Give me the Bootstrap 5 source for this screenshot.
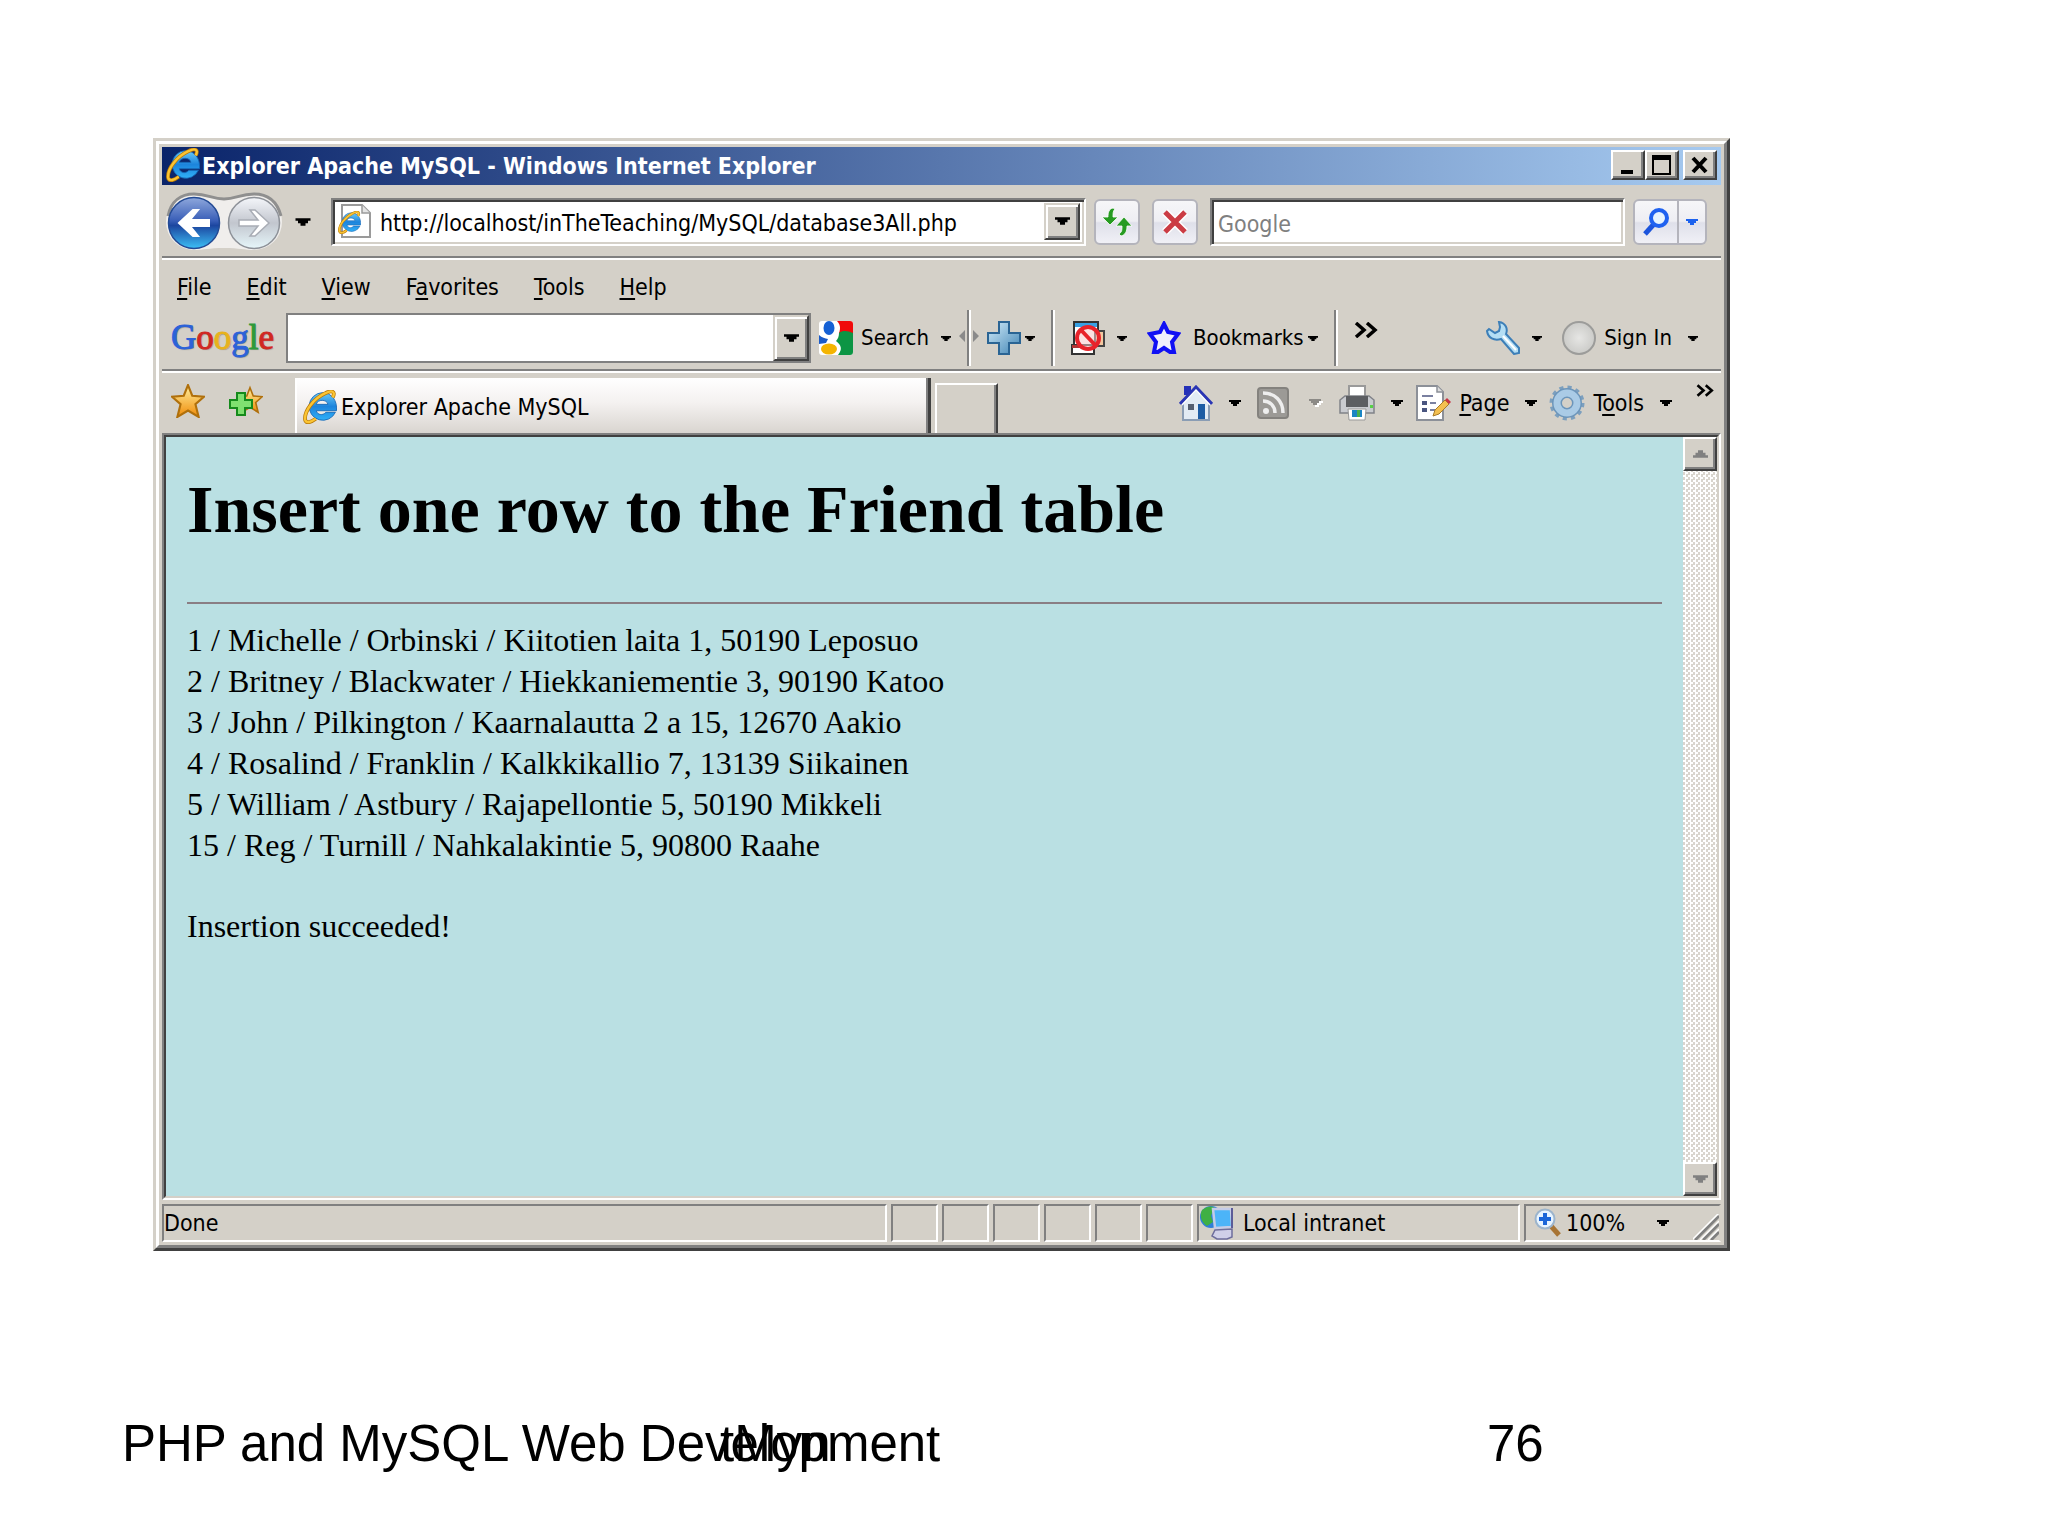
<!DOCTYPE html>
<html lang="en">
<head>
<meta charset="utf-8">
<meta name="viewport" content="width=device-width, initial-scale=1">
<title>PHP and MySQL Web Development</title>
<link href="https://cdn.jsdelivr.net/npm/bootstrap@5.3.0/dist/css/bootstrap.min.css" rel="stylesheet">
<style>
:root{--face:#d4d0c8;--shade:#808080;--dark:#404040}
body{background:#fff;color:#000;font-family:"DejaVu Sans Condensed","DejaVu Sans",sans-serif;font-size:23px;line-height:28px}
svg{display:block;flex:none}
button,input{font:inherit;color:inherit}
a{color:inherit;text-decoration:none}
u{text-decoration-thickness:2px;text-underline-offset:3px}
.slide-body{padding:138px 318px 0 153px}
.win-outer{border:3px solid;border-color:var(--face) var(--dark) var(--dark) var(--face)}
.win-inner{border:3px solid;border-color:#fff var(--shade) var(--shade) #fff;padding:3px;background:var(--face)}
.title-bar{height:38px;background:linear-gradient(90deg,#0a246a,#a6caf0);color:#fff;font-weight:700;padding:0 4px 2px}
.title-bar h2{font:inherit;margin:0;padding:2px 0 0 2px}
.win-btn{width:34px;height:30px;padding:0;display:flex;align-items:center;justify-content:center;background:var(--face);border:2px solid;border-color:#fff var(--dark) var(--dark) #fff;box-shadow:inset -2px -2px 0 var(--shade)}
.groove{border-bottom:2px solid var(--shade);box-shadow:0 2px 0 #fff}
.nav-row{height:73px;padding:2px 14px 0 3px}
.sunk{background:#fff;border:2px solid;border-color:var(--shade) #fff #fff var(--shade);box-shadow:inset 2px 2px 0 var(--dark),inset -2px -2px 0 var(--face)}
.address{height:48px;padding:3px 4px 4px 5px}
.bare{border:0;outline:0;background:none;padding:0;min-width:0}
.address .bare{padding-top:4px}
.bare::placeholder,.find::placeholder{color:#808080;opacity:1}
.find{height:48px;width:415px;padding:4px 6px 0}
.soft{height:46px;min-width:46px;padding:0;border:2px solid #b4b4bc;border-radius:6px;background:linear-gradient(#f6f6f8,#eeeef3 48%,#dfe0ea 52%,#f0f0f6);display:flex;align-items:center;justify-content:center}
.soft-narrow{min-width:28px;color:#1c62ee}
.menu-row{height:53px;padding:4px 15px 0;gap:35px}
.google-row{height:60px;padding:0 23px 4px 9px;font-size:22px}
.combo{flex:0 1 525px;height:50px;background:#fff;border:2px solid var(--shade)}
.drop-btn{width:36px;padding:0;align-self:stretch;display:flex;align-items:center;justify-content:center;background:var(--face);border:2px solid;border-color:var(--face) var(--dark) var(--dark) var(--face);box-shadow:inset 2px 2px 0 #fff,inset -2px -2px 0 var(--shade)}
.glogo{font:35px/40px "Liberation Serif",serif;text-shadow:1px 1px 1px #0004;-webkit-text-stroke:1px}
.g-blue{color:#2c62d8}.g-red{color:#d02822}.g-gold{color:#e8b21c}.g-green{color:#2f9a3a}
.tool{border:0;background:none;padding:0;display:flex;align-items:center;white-space:nowrap}
.rule-v{width:4px;height:56px;border-left:2px solid var(--shade);border-right:2px solid #fff;flex:none}
.s4{margin-left:4px}.s8{margin-left:8px}.s12{margin-left:12px}.s16{margin-left:16px}.s20{margin-left:20px}.s24{margin-left:24px}.s32{margin-left:32px}
.tab-row{height:62px;padding:0 7px 0 9px}
.tab-on{width:636px;height:55px;padding:2px 8px 0;background:linear-gradient(#fff,#f4f1f0 45%,#d9d5d0);border:0;border-right:3px solid var(--dark);box-shadow:inset 2px 0 0 #fff,inset -2px 0 0 var(--shade)}
.tab-new{width:63px;height:50px;background:var(--face);border:2px solid;border-color:#fff var(--dark) transparent #fff;border-bottom:0;box-shadow:inset -2px 0 0 var(--shade);padding:0}
.tab-tools{padding-top:13px}
.view{border:2px solid;border-color:var(--shade) #fff #fff var(--shade)}
.view-in{border:2px solid;border-color:var(--dark) var(--face) var(--face) var(--dark);min-height:763px;background:#bae0e3}
.page{font-family:"Liberation Serif",serif;font-size:32px;line-height:41px;padding:34px 21px 0 21px}
.page h1{font-size:68px;line-height:76px;font-weight:700;margin:0 0 55px}
.page hr{margin:0 0 16px;border:0;border-top:2px solid #8a7e84;opacity:1}
.page ul{margin:0 0 40px}
.scroll{width:34px;background:repeating-conic-gradient(#fff 0 25%,#d9d5ce 0 50%) 0 0/5px 5px}
.scroll .win-btn{height:34px}
.status{gap:4px;margin-top:4px;height:38px}
.cell{border:2px solid;border-color:var(--shade) #fff #fff var(--shade);width:47px;height:38px;white-space:nowrap}
.cell-zone{width:323px}.cell-zoom{width:197px;border-right-color:transparent}
.slide-foot{font-family:"Liberation Sans",sans-serif;font-size:51px;line-height:58px;padding:164px 0 40px 122px;white-space:nowrap}
.f1{width:598px}.f2{width:767px}
</style>
</head>
<body>
<svg width="0" height="0" class="position-absolute" aria-hidden="true">
<defs>
<linearGradient id="gb" x1="0" y1="0" x2="0" y2="1"><stop offset="0" stop-color="#8fa8dc"/><stop offset=".45" stop-color="#3a5fb8"/><stop offset=".55" stop-color="#1c46a0"/><stop offset="1" stop-color="#3cc0f6"/></linearGradient>
<linearGradient id="gf" x1="0" y1="0" x2="0" y2="1"><stop offset="0" stop-color="#f4f6fa"/><stop offset=".5" stop-color="#c2c6ce"/><stop offset="1" stop-color="#e6f6fa"/></linearGradient>
<linearGradient id="gs" x1="0" y1="0" x2="0" y2="1"><stop offset="0" stop-color="#fff0a0"/><stop offset="1" stop-color="#f08c08"/></linearGradient>
<linearGradient id="gp" x1="0" y1="0" x2="1" y2="1"><stop offset="0" stop-color="#d2ecfa"/><stop offset="1" stop-color="#3f83b4"/></linearGradient>
<linearGradient id="ge" x1="0" y1="0" x2="0" y2="1"><stop offset="0" stop-color="#6cccf8"/><stop offset=".5" stop-color="#1c84dc"/><stop offset="1" stop-color="#30b0f8"/></linearGradient>
<radialGradient id="go"><stop offset="0" stop-color="#e6e6e4"/><stop offset="1" stop-color="#cbcbc8"/></radialGradient>
<symbol id="dn" viewBox="0 0 12 8"><path d="M0 1h12v2h-2v2H8v2H4V5H2V3H0z" fill="currentColor"/></symbol>
<symbol id="up" viewBox="0 0 12 8"><path d="M0 7h12V5h-2V3H8V1H4v2H2v2H0z" fill="currentColor"/></symbol>
<symbol id="ie" viewBox="0 0 32 32"><path d="M18 2.500a13 13 0 1 0 12.500 18.500h-9c-3 3.500-8 2.500-9-1.500h19C32.500 10 27 2.500 18 2.500zM12.500 13.500c1-5 10-5 11 0z" fill="url(#ge)" stroke="#1566b4" stroke-width=".8" fill-rule="evenodd"/><path d="M28 7c3-6-1-7-7-4C10 8 1 20 2 28c1 4 6 2 10-1" fill="none" stroke="#b97a08" stroke-width="3.600"/><path d="M28 7c3-6-1-7-7-4C10 8 1 20 2 28c1 4 6 2 10-1" fill="none" stroke="#fbc433" stroke-width="2.200"/></symbol>
<symbol id="star" viewBox="0 0 32 32"><path d="M16 1l4 10 11 1-8 7 3 12-10-6-10 6 3-12-8-7 11-1z" fill="url(#gs)" stroke="#b0700c" stroke-width="2"/></symbol>
<symbol id="more" viewBox="0 0 24 16"><path d="M2 1l8 7-8 7M13 1l8 7-8 7" fill="none" stroke="#000" stroke-width="3.500"/></symbol>
</defs>
</svg>

<main class="slide-body">
<div class="win-outer"><div class="win-inner">
  <div class="title-bar d-flex align-items-center">
    <svg width="34" height="34" aria-hidden="true"><use href="#ie"/></svg>
    <h2 class="flex-grow-1 text-nowrap">Explorer Apache MySQL - Windows Internet Explorer</h2>
    <button class="win-btn" aria-label="Minimize"><svg width="20" height="20"><path d="M3 15h12v4H3z"/></svg></button>
    <button class="win-btn" aria-label="Maximize"><svg width="20" height="20"><path d="M0 0h19v20H0zM2 5v13h15V5z" fill-rule="evenodd"/></svg></button>
    <button class="win-btn s4" aria-label="Close"><svg width="20" height="18"><path d="M3 2l13 14M16 2L3 16" stroke="#000" stroke-width="4"/></svg></button>
  </div>

  <div class="nav-row groove d-flex align-items-center">
    <svg width="118" height="60" viewBox="0 0 118 60" role="img" aria-label="Back and forward">
      <path d="M29 2c14 0 18 5 30 5S75 2 89 2a28 28 0 0 1 0 56c-10 0-14-2-30-2s-20 2-30 2a28 28 0 0 1 0-56z" fill="#f0eeec"/>
      <path d="M3 24C6 9 16 2 29 2c14 0 18 5 30 5S75 2 89 2c13 0 23 7 27 22" fill="none" stroke="#8f8f8f" stroke-width="3"/>
      <circle cx="29" cy="31" r="25.500" fill="url(#gb)" stroke="#234a94" stroke-width="1.500"/>
      <circle cx="89" cy="31" r="25.500" fill="url(#gf)" stroke="#8d9198" stroke-width="1.500"/>
      <path d="M14 31l14-13h5l-8 10h19v6H25l8 10h-5z" fill="#fff" stroke="#fff" stroke-width="2"/>
      <path d="M104 31L90 18h-5l8 10H74v6h19l-8 10h5z" fill="#fff" stroke="#a9adb5" stroke-width="1.500"/>
    </svg>
    <button class="tool s12" aria-label="Recent pages"><svg width="16" height="10"><use href="#dn"/></svg></button>
    <div class="address sunk d-flex align-items-center flex-grow-1 s20">
      <svg width="34" height="34" viewBox="0 0 34 34"><path d="M4 1h20l8 8v24H4z" fill="#fff" stroke="#9a9a9a" stroke-width="2"/><path d="M24 1v8h8" fill="#e4e4e4" stroke="#9a9a9a" stroke-width="1.500"/><use href="#ie" x="0" y="7" width="23" height="23"/></svg>
      <input class="bare flex-grow-1 s8" aria-label="Address" value="http://localhost/inTheTeaching/MySQL/database3All.php">
      <button class="drop-btn" aria-label="Show addresses"><svg width="15" height="10"><use href="#dn"/></svg></button>
    </div>
    <button class="soft s8" aria-label="Refresh"><svg width="32" height="30" viewBox="0 0 32 30"><path d="M12 1c-4 1-5 4-5 9H1l8 8 8-8h-5c0-4 0-6 2-8zM20 29c4-1 6-4 6-10h5l-8-9-8 9h6c0 4 0 6-3 8z" fill="#279b22" stroke="#fff" stroke-width=".8"/></svg></button>
    <button class="soft s12" aria-label="Stop"><svg width="26" height="26" viewBox="0 0 26 26"><path d="M3 3l20 20M23 3L3 23" stroke="#fff" stroke-width="8"/><path d="M3 3l20 20M23 3L3 23" stroke="#cb3c44" stroke-width="5"/></svg></button>
    <input class="find sunk s12" aria-label="Search the web" placeholder="Google">
    <div class="d-flex s8">
      <button class="soft rounded-end-0" aria-label="Search"><svg width="28" height="30" viewBox="0 0 28 30"><path d="M3 27l9-10" stroke="#1c54dc" stroke-width="5"/><circle cx="17" cy="11" r="8" fill="#e6f4ff" stroke="#1f62f0" stroke-width="4"/></svg></button>
      <button class="soft soft-narrow rounded-start-0 border-start-0" aria-label="Search options"><svg width="12" height="8"><use href="#dn"/></svg></button>
    </div>
  </div>

  <nav class="menu-row d-flex align-items-center" aria-label="Menu bar">
    <a href="#"><u>F</u>ile</a><a href="#"><u>E</u>dit</a><a href="#"><u>V</u>iew</a><a href="#">F<u>a</u>vorites</a><a href="#"><u>T</u>ools</a><a href="#"><u>H</u>elp</a>
  </nav>

  <div class="google-row groove d-flex align-items-center">
    <span class="glogo"><span class="g-blue">G</span><span class="g-red">o</span><span class="g-gold">o</span><span class="g-blue">g</span><span class="g-green">l</span><span class="g-red">e</span></span>
    <div class="combo d-flex align-items-center s12">
      <input class="bare flex-grow-1 px-2" aria-label="Google search">
      <button class="drop-btn" aria-label="Search history"><svg width="15" height="10"><use href="#dn"/></svg></button>
    </div>
    <button class="tool s8"><svg width="34" height="34" viewBox="0 0 34 34"><rect width="34" height="34" rx="3" fill="#fff"/><path d="M18 0h13q3 0 3 3v9H20c2-5 1-9-2-12z" fill="#f00a0a"/><path d="M20 12c4-3 9-2 14 0v19q0 3-3 3H19c5-6 3-10-2-14 2-2 3-5 3-8z" fill="#0c9544"/><path d="M0 14c3 3 6 3 9 4l-2 4-7 1z" fill="#1a5bc8"/><ellipse cx="10" cy="7" rx="5.500" ry="7" fill="#1560d4"/><ellipse cx="10" cy="28" rx="8" ry="5.500" fill="#f4b400"/></svg><span class="s8">Search</span><svg class="s12" width="10" height="7"><use href="#dn"/></svg></button>
    <svg class="s8" width="20" height="56" viewBox="0 0 20 56" role="separator"><path d="M8 0h2v56H8z" fill="#808080"/><path d="M10 0h2v56h-2z" fill="#fff"/><path d="M0 26l6-6v12zM20 26l-6-6v12z" fill="#8a8a8a"/></svg>
    <button class="tool s8" aria-label="Add"><svg width="34" height="34" viewBox="0 0 34 34"><path d="M12 1h10v11h11v10H22v11H12V22H1V12h11z" fill="url(#gp)" stroke="#2a6494" stroke-width="2"/></svg><svg class="s4" width="10" height="7"><use href="#dn"/></svg></button>
    <span class="rule-v s16"></span>
    <button class="tool s16" aria-label="Pop-up blocker"><svg width="34" height="34" viewBox="0 0 34 34"><path d="M3 1h24v24H3z" fill="#fff" stroke="#333" stroke-width="2"/><path d="M4 2h22v4H4z" fill="#38a0e4"/><path d="M24 10h9v15h-9z" fill="#f4c8a0" stroke="#444" stroke-width="2"/><path d="M1 24h22v9H1z" fill="#fff" stroke="#333" stroke-width="2"/><path d="M1 24h12v3H1z" fill="#b03434"/><circle cx="17" cy="17" r="11" fill="#f8c8c888" stroke="#e8232a" stroke-width="4"/><path d="M10 9l15 16" stroke="#e8232a" stroke-width="4"/></svg><svg class="s12" width="10" height="7"><use href="#dn"/></svg></button>
    <button class="tool s20"><svg width="34" height="34" viewBox="0 0 34 34"><path d="M17 3l4 8 10 2-6 8 2 10h-4l-6-4-6 4H7l2-10-6-8 10-2z" fill="#f0f0fc" stroke="#1010f4" stroke-width="4"/></svg><span class="s12">Bookmarks</span><svg class="s4" width="10" height="7"><use href="#dn"/></svg></button>
    <span class="rule-v s16"></span>
    <button class="tool s16 pb-3" aria-label="More buttons"><svg width="24" height="16"><use href="#more"/></svg></button>
    <button class="tool ms-auto" aria-label="Toolbar options"><svg width="34" height="34" viewBox="0 0 34 34"><path d="M13 1c7 1 9 7 7 12l13 14v5l-5 1-13-15C8 20 2 17 1 10l2-2 6 4 4-2 1-4z" fill="#b4def4" stroke="#3d7fb8" stroke-width="2"/><path d="M17 15l13 14" stroke="#fff" stroke-width="2"/></svg><svg class="s12" width="10" height="7"><use href="#dn"/></svg></button>
    <button class="tool s20"><svg width="34" height="34" viewBox="0 0 34 34"><circle cx="17" cy="17" r="16" fill="url(#go)" stroke="#9c9c9a" stroke-width="2"/></svg><span class="s8">Sign In</span><svg class="s16" width="10" height="7"><use href="#dn"/></svg></button>
  </div>

  <div class="tab-row d-flex align-items-end">
    <div class="tab-tools d-flex align-items-center align-self-start">
      <button class="tool" aria-label="Favorites"><svg width="34" height="34"><use href="#star"/></svg></button>
      <button class="tool s24" aria-label="Add to favorites"><svg width="34" height="34" viewBox="0 0 34 34"><use href="#star" x="8" y="1" width="26" height="30"/><path d="M8 9h8v7h7v8h-7v7H8v-7H1v-8h7z" fill="#7fe070" stroke="#158a1c" stroke-width="2"/></svg></button>
    </div>
    <button class="tab-on d-flex align-items-center s32"><svg width="34" height="34" aria-hidden="true"><use href="#ie"/></svg><span class="s4">Explorer Apache MySQL</span></button>
    <button class="tab-new s4" aria-label="New tab"></button>
    <div class="tab-tools d-flex align-items-center align-self-start ms-auto">
      <button class="tool" aria-label="Home"><svg width="34" height="36" viewBox="0 0 34 36"><path d="M5 1h7v9H5z" fill="#2430b8"/><path d="M4 18L17 4l13 14v17H4z" fill="#e2ebf4" stroke="#8a9db4" stroke-width="2"/><path d="M1 19L17 2l16 17" fill="none" stroke="#2a35b4" stroke-width="3"/><path d="M3 20L17 5l14 15" fill="none" stroke="#fff" stroke-width="1.500"/><path d="M19 19h7v15h-7z" fill="#1c5ca4"/><path d="M9 19h6v6H9z" fill="#555f70"/></svg><svg class="s16" width="12" height="8"><use href="#dn"/></svg></button>
      <button class="tool s16" aria-label="Feeds" disabled><svg width="32" height="32" viewBox="0 0 32 32"><rect x="1" y="1" width="30" height="30" rx="3" fill="#9c9a96" stroke="#84827e" stroke-width="2"/><circle cx="9" cy="24" r="3" fill="#eee"/><path d="M6 14c7 0 12 5 12 12M6 6c12 0 20 8 20 20" fill="none" stroke="#eee" stroke-width="3.500"/></svg><svg class="s20" width="14" height="10" viewBox="0 0 14 10"><use href="#dn" x="2" y="2" width="12" height="8" color="#fff"/><use href="#dn" width="12" height="8" color="#8c8a86"/></svg></button>
      <button class="tool s16" aria-label="Print"><svg width="36" height="36" viewBox="0 0 36 36"><path d="M10 1h16v14H10z" fill="#fff" stroke="#9a9a9a" stroke-width="2"/><path d="M1 15l5-4h24l5 4v13H1z" fill="#c9cbd0" stroke="#808288" stroke-width="1.500"/><path d="M7 11h22v11H7z" fill="#5c5e62"/><path d="M9 24h18l-1 11H10z" fill="#fff" stroke="#999" stroke-width="1"/><path d="M13 25h10v7H13z" fill="#1b86c4"/><path d="M18 25h3v7h-3z" fill="#4ab04c"/><path d="M31 20h3v3h-3z" fill="#58d048"/></svg><svg class="s16" width="12" height="8"><use href="#dn"/></svg></button>
      <button class="tool s12"><svg width="36" height="36" viewBox="0 0 36 36"><path d="M2 1h20l6 6v28H2z" fill="#fff" stroke="#8c9098" stroke-width="2"/><path d="M22 1v6h6" fill="#ddd" stroke="#8c9098" stroke-width="1.500"/><path d="M7 11h11M15 18h6M15 25h5" stroke="#7a80a0" stroke-width="2"/><path d="M7 16h5v4H7zM7 23h5v4H7z" fill="#4a5580"/><path d="M18 31l2-6 10-10 4 4-10 10z" fill="#f4c050" stroke="#a87a28" stroke-width="1"/><path d="M30 15l2-2 4 4-2 2z" fill="#c83444"/></svg><span class="s8"><u>P</u>age</span><svg class="s16" width="12" height="8"><use href="#dn"/></svg></button>
      <button class="tool s12"><svg width="36" height="36" viewBox="0 0 36 36"><circle cx="18" cy="18" r="15.500" fill="none" stroke="#7c9fbe" stroke-width="4" stroke-dasharray="4.060 4.060"/><circle cx="18" cy="18" r="10" fill="none" stroke="#6c95ba" stroke-width="10"/><circle cx="18" cy="18" r="10" fill="none" stroke="#aacbe6" stroke-width="7"/></svg><span class="s8">T<u>o</u>ols</span><svg class="s16" width="12" height="8"><use href="#dn"/></svg></button>
      <button class="tool s24 pb-4" aria-label="More commands"><svg width="18" height="13"><use href="#more"/></svg></button>
    </div>
  </div>

  <div class="view"><div class="view-in d-flex">
    <article class="page flex-grow-1">
      <h1>Insert one row to the Friend table</h1>
      <hr>
      <ul class="list-unstyled">
        <li>1 / Michelle / Orbinski / Kiitotien laita 1, 50190 Leposuo</li>
        <li>2 / Britney / Blackwater / Hiekkaniementie 3, 90190 Katoo</li>
        <li>3 / John / Pilkington / Kaarnalautta 2 a 15, 12670 Aakio</li>
        <li>4 / Rosalind / Franklin / Kalkkikallio 7, 13139 Siikainen</li>
        <li>5 / William / Astbury / Rajapellontie 5, 50190 Mikkeli</li>
        <li>15 / Reg / Turnill / Nahkalakintie 5, 90800 Raahe</li>
      </ul>
      <p class="mb-0">Insertion succeeded!</p>
    </article>
    <div class="scroll d-flex flex-column justify-content-between">
      <button class="win-btn" aria-label="Scroll up"><svg width="15" height="10" color="#808080"><use href="#up"/></svg></button>
      <button class="win-btn" aria-label="Scroll down"><svg width="15" height="10" color="#808080"><use href="#dn"/></svg></button>
    </div>
  </div></div>

  <div class="status d-flex">
    <div class="cell flex-grow-1 d-flex align-items-center">Done</div>
    <div class="cell"></div><div class="cell"></div><div class="cell"></div><div class="cell"></div><div class="cell"></div><div class="cell"></div>
    <div class="cell cell-zone d-flex align-items-center"><svg width="36" height="34" viewBox="0 0 36 34"><circle cx="12" cy="11" r="11" fill="#2f7fd8"/><path d="M3 4c5-4 9-4 12-3l-3 9 2 6-6 4C3 17 0 10 3 4z" fill="#3fb044"/><path d="M14 3h18l1 18-17 1z" fill="#4cb4f8" stroke="#c4cce8" stroke-width="2.500"/><path d="M33 2v20" stroke="#5c5c98" stroke-width="2"/><path d="M16 24l17-1v8l-5 2H18l-5-3z" fill="#cfcfe8" stroke="#6d6d9c" stroke-width="1.500"/></svg><span class="s8">Local intranet</span></div>
    <div class="cell cell-zoom d-flex align-items-center justify-content-between">
      <button class="tool s8" aria-label="Change zoom level"><svg width="28" height="30" viewBox="0 0 28 30"><path d="M17 18l8 9" stroke="#a87434" stroke-width="5"/><circle cx="11" cy="11" r="9.500" fill="#e8f4ff" stroke="#9cb4cc" stroke-width="2"/><path d="M11 5v12M5 11h12" stroke="#1c66d8" stroke-width="4"/></svg><span class="s4">100%</span><svg class="s32" width="12" height="8"><use href="#dn"/></svg></button>
      <svg class="align-self-end" width="26" height="26" viewBox="0 0 26 26"><path d="M2 26L26 2M10 26L26 10M18 26l8-8" stroke="#808080" stroke-width="3"/><path d="M-1 26L26-1M7 26L26 7M15 26l11-11" stroke="#fff" stroke-width="1.500"/></svg>
    </div>
  </div>
</div></div>
</main>

<footer class="slide-foot d-flex">
  <div class="f1">PHP and MySQL Web Development</div>
  <div class="f2">tMyn</div>
  <div>76</div>
</footer>
<script src="https://cdn.jsdelivr.net/npm/bootstrap@5.3.0/dist/js/bootstrap.bundle.min.js"></script>
</body>
</html>
